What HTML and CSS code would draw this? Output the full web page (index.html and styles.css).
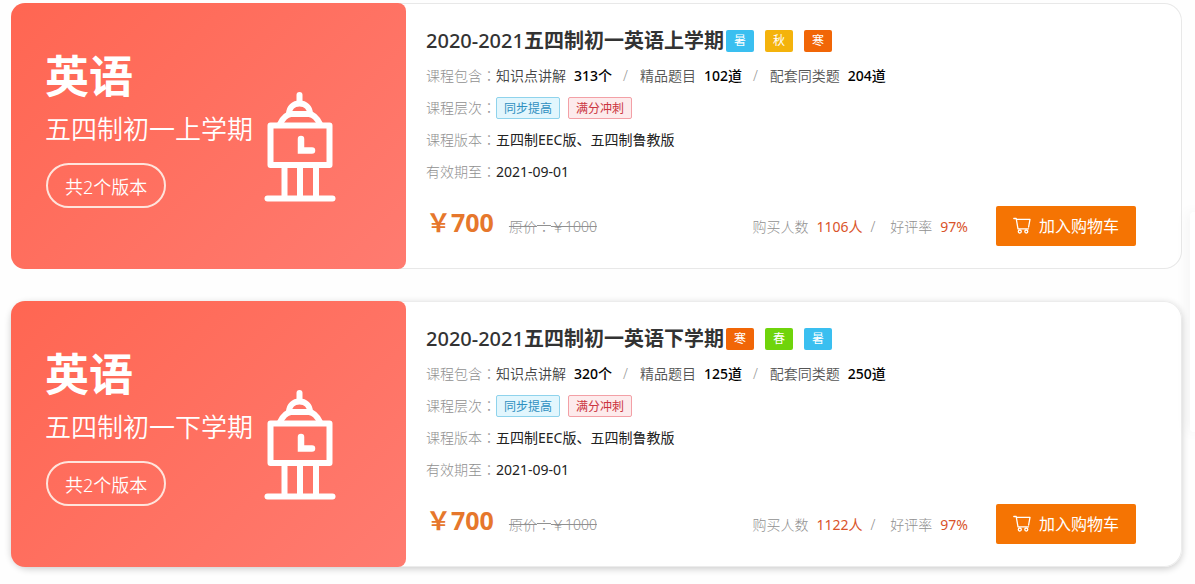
FILE: index.html
```html
<!DOCTYPE html>
<html lang="zh-CN">
<head>
<meta charset="utf-8">
<title>初一英语课程</title>
<link rel="stylesheet" href="styles.css">
</head>
<body>
<svg class="defs" width="0" height="0" aria-hidden="true">
  <symbol id="tower" viewBox="0 0 72 112">
    <g fill="none" stroke="currentColor" stroke-width="6" stroke-linecap="round" stroke-linejoin="round">
      <path d="M35.500 4V12"/>
      <path d="M25 23C25 16 30 12.500 35.500 12.500S46 16 46 23"/>
      <path d="M16 33C19 27 22 23.500 27 23H45C50 23.500 53 27 56 33"/>
      <path d="M6.500 34.500H65.500V74H6.500Z"/>
      <path d="M37 48V59.500H48" stroke-width="6.500" stroke-linejoin="miter"/>
      <path d="M20.500 74V107M36 74V107M52 74V107"/>
      <path d="M3.500 107.500H68.500"/>
    </g>
  </symbol>
  <symbol id="cart" viewBox="0 0 18 18">
    <g fill="none" stroke="currentColor" stroke-width="1.300" stroke-linecap="round" stroke-linejoin="round">
      <path d="M.8 1.500H3.200L5 11.800H15.500"/>
      <path d="M3.600 2.300H17L15.600 10"/>
      <circle cx="6.800" cy="14.500" r="1.500"/>
      <circle cx="13.300" cy="14.500" r="1.500"/>
    </g>
  </symbol>
</svg>

<main class="courses">
  <article class="card">
    <div class="cover">
      <div class="cover-text">
        <div class="subject">英语</div>
        <div class="term">五四制初一上学期</div>
        <div class="versions">共2个版本</div>
      </div>
      <svg class="tower" aria-hidden="true"><use href="#tower"/></svg>
    </div>
    <div class="info">
      <div class="heading">
        <h2 class="title"><span class="year">2020-2021</span>五四制初一英语上学期</h2>
        <span class="season summer">暑</span>
        <span class="season autumn">秋</span>
        <span class="season winter">寒</span>
      </div>
      <div class="row"><span class="label">课程包含<span class="colon" lang="zh-TW">：</span></span><span class="first">知识点讲解</span><b class="count">313个</b><span class="slash">/</span><span class="item">精品题目</span><b class="count">102道</b><span class="slash">/</span><span class="item">配套同类题</span><b class="count">204道</b></div>
      <div class="row"><span class="label">课程层次<span class="colon" lang="zh-TW">：</span></span><span class="tag blue">同步提高</span><span class="tag red">满分冲刺</span></div>
      <div class="row"><span class="label">课程版本<span class="colon" lang="zh-TW">：</span></span><span class="value">五四制EEC版、五四制鲁教版</span></div>
      <div class="row"><span class="label">有效期至<span class="colon" lang="zh-TW">：</span></span><span class="value">2021-09-01</span></div>
      <div class="buy">
        <span class="price">￥700</span>
        <del class="old">原价<span class="colon" lang="zh-TW">：</span>￥1000</del>
        <div class="stats"><span>购买人数</span><span class="hot">1106人</span><span class="divider">/</span><span>好评率</span><span class="hot">97%</span></div>
        <button class="add" type="button"><svg class="cart" aria-hidden="true"><use href="#cart"/></svg>加入购物车</button>
      </div>
    </div>
  </article>

  <article class="card raised">
    <div class="cover">
      <div class="cover-text">
        <div class="subject">英语</div>
        <div class="term">五四制初一下学期</div>
        <div class="versions">共2个版本</div>
      </div>
      <svg class="tower" aria-hidden="true"><use href="#tower"/></svg>
    </div>
    <div class="info">
      <div class="heading">
        <h2 class="title"><span class="year">2020-2021</span>五四制初一英语下学期</h2>
        <span class="season winter">寒</span>
        <span class="season spring">春</span>
        <span class="season summer">暑</span>
      </div>
      <div class="row"><span class="label">课程包含<span class="colon" lang="zh-TW">：</span></span><span class="first">知识点讲解</span><b class="count">320个</b><span class="slash">/</span><span class="item">精品题目</span><b class="count">125道</b><span class="slash">/</span><span class="item">配套同类题</span><b class="count">250道</b></div>
      <div class="row"><span class="label">课程层次<span class="colon" lang="zh-TW">：</span></span><span class="tag blue">同步提高</span><span class="tag red">满分冲刺</span></div>
      <div class="row"><span class="label">课程版本<span class="colon" lang="zh-TW">：</span></span><span class="value">五四制EEC版、五四制鲁教版</span></div>
      <div class="row"><span class="label">有效期至<span class="colon" lang="zh-TW">：</span></span><span class="value">2021-09-01</span></div>
      <div class="buy">
        <span class="price">￥700</span>
        <del class="old">原价<span class="colon" lang="zh-TW">：</span>￥1000</del>
        <div class="stats"><span>购买人数</span><span class="hot">1122人</span><span class="divider">/</span><span>好评率</span><span class="hot">97%</span></div>
        <button class="add" type="button"><svg class="cart" aria-hidden="true"><use href="#cart"/></svg>加入购物车</button>
      </div>
    </div>
  </article>
</main>
<aside class="side-tab"></aside>
</body>
</html>
```
FILE: styles.css
```css
* { box-sizing: border-box; }
body {
  margin: 0;
  background: #fefefe;
  color: #333;
  font: 14px/32px "Noto Sans", "Noto Sans CJK SC", sans-serif;
  overflow-x: hidden;
}
.defs { position: absolute; }
.courses {
  display: flex;
  flex-direction: column;
  gap: 32px;
  padding: 3px 13px 16px 11px;
}
.card {
  display: flex;
  border-radius: 18px;
  background: #fff;
  box-shadow: inset 0 0 0 1px #e8e8e8;
}
.raised { box-shadow: inset 0 0 0 1px #ececec, 0 2px 7px rgba(0, 0, 0, .2); }
.cover {
  flex: none;
  display: flex;
  width: 395px;
  padding: 45px 0 60px 34px;
  gap: 11px;
  border-radius: 14px 8px 8px 14px;
  background: linear-gradient(135deg, #ff6652, #ff7b70);
  color: #fff;
}
.subject { font-size: 44px; font-weight: 700; line-height: 56px; }
.term { font-size: 26px; line-height: 50px; font-weight: 350; }
.versions {
  width: max-content;
  margin: 9px 0 0 1px;
  padding: 3px 17px 0;
  border: 2px solid #ffe4dc;
  border-radius: 23px;
  font-size: 18px;
  line-height: 38px;
  font-weight: 350;
}
.tower { width: 72px; height: 112px; margin-top: 43px; }
.info {
  flex: 1;
  padding: 20px 46px 23px 20px;
}
.heading { display: flex; align-items: center; gap: 11px; height: 36px; margin-bottom: 1px; }
.title { margin: 0 -9px 0 0; font-size: 20px; line-height: 32px; font-weight: 700; }
.year { font-weight: 500; }
.season {
  width: 28px;
  height: 22px;
  border-radius: 2px;
  color: #fff;
  font-size: 12px;
  line-height: 22px;
  text-align: center;
}
.summer { background: #3abff0; }
.autumn { background: #f4b30c; }
.winter { background: #f16607; }
.spring { background: #6fd40b; }
.row { display: flex; align-items: center; height: 32px; white-space: nowrap; }
.label { color: #909090; font-weight: 300; }
.colon { font-family: "Noto Sans CJK TC", sans-serif; line-height: 1; }
.first { color: #444; font-weight: 350; }
.item { color: #555; font-weight: 350; }
.value { color: #222; font-weight: 400; }
.count { margin-left: 8px; color: #000; font-weight: 500; }
.slash { margin: 0 12px 0 11px; color: #999; font-weight: 300; }
.tag {
  margin-right: 8px;
  padding: 1px 7px 0;
  border: 1px solid;
  border-radius: 2px;
  font-size: 12px;
  line-height: 19px;
}
.blue { border-color: #8fd3ec; background: #e2f6fd; color: #2e8fc0; }
.red { border-color: #f3a0a6; background: #fdebec; color: #cb3440; }
.buy { display: flex; align-items: center; height: 40px; margin-top: 18px; white-space: nowrap; }
.price { padding-bottom: 8px; color: #e6772c; font-size: 25px; font-weight: 700; line-height: 30px; }
.old { margin-left: 15px; padding-top: 2px; color: #909090; font-weight: 300; }
.stats { display: flex; margin-left: auto; padding-top: 2px; color: #909090; font-weight: 300; }
.hot { margin-left: 8px; color: #d9532a; font-weight: 400; }
.divider { margin: 0 15px 0 8px; }
.add {
  display: flex;
  align-items: center;
  justify-content: center;
  gap: 8px;
  width: 140px;
  height: 40px;
  margin-left: 28px;
  border: 0;
  border-radius: 2px;
  background: #f57403;
  color: #fff;
  font: inherit;
  font-size: 16px;
  cursor: pointer;
}
.cart { width: 18px; height: 18px; }
.side-tab {
  position: fixed;
  top: 212px;
  right: 0;
  width: 5px;
  height: 220px;
  border-radius: 4px 0 0 4px;
  background: #fff;
  box-shadow: 0 0 14px rgba(0, 0, 0, .1);
}
```
